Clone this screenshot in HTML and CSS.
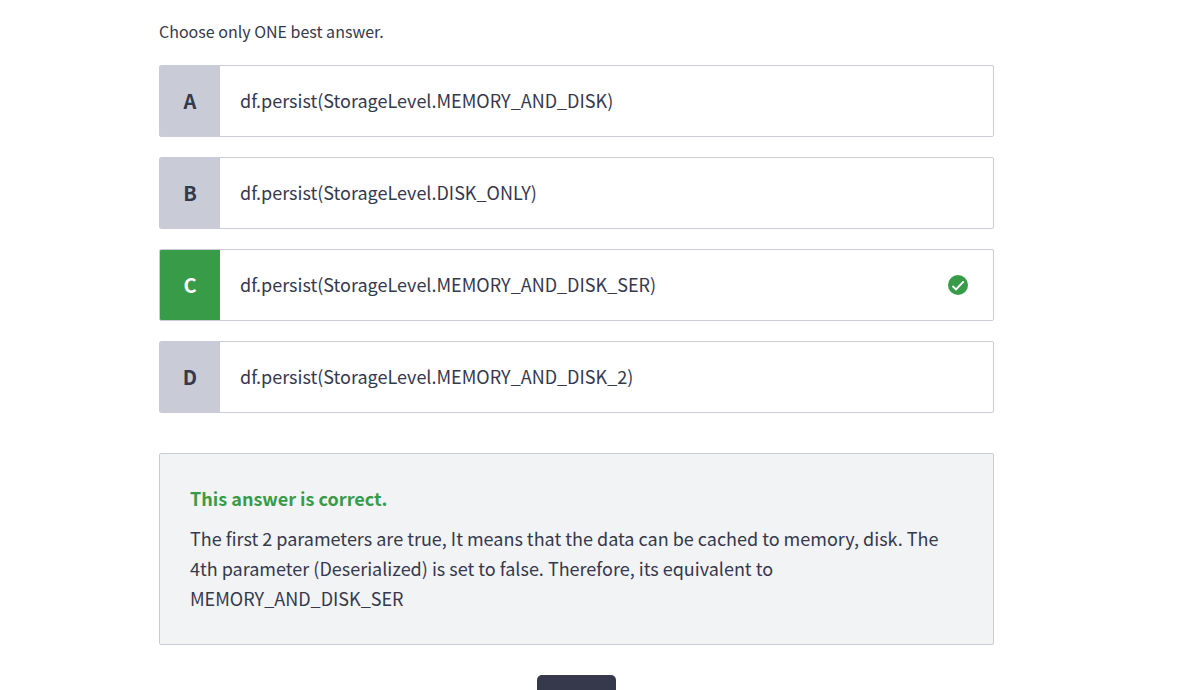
FILE: index.html
```html
<!DOCTYPE html>
<html lang="en">
<head>
<meta charset="utf-8">
<meta name="viewport" content="width=device-width, initial-scale=1">
<title>Quiz question</title>
<link rel="stylesheet" href="styles.css">
</head>
<body>
<main class="quiz">
  <p class="prompt">Choose only ONE best answer.</p>
  <div class="options">
    <button type="button" class="option"><span class="letter">A</span><span class="answer">df.persist(StorageLevel.MEMORY_AND_DISK)</span></button>
    <button type="button" class="option"><span class="letter">B</span><span class="answer">df.persist(StorageLevel.DISK_ONLY)</span></button>
    <button type="button" class="option option-correct"><span class="letter">C</span><span class="answer">df.persist(StorageLevel.MEMORY_AND_DISK_SER)</span>
      <svg class="check" viewBox="0 0 20 20" aria-hidden="true"><circle cx="10" cy="10" r="10" fill="#389b48"/><path d="M4.5 11 8 14.5 15.7 6.3" fill="none" stroke="#fff" stroke-width="1.9"/></svg>
    </button>
    <button type="button" class="option"><span class="letter">D</span><span class="answer">df.persist(StorageLevel.MEMORY_AND_DISK_2)</span></button>
  </div>
  <section class="explanation">
    <h2 class="verdict">This answer is correct.</h2>
    <p class="reason">The first 2 parameters are true, It means that the data can be cached to memory, disk. The 4th parameter (Deserialized) is set to false. Therefore, its equivalent to MEMORY_AND_DISK_SER</p>
  </section>
  <button type="button" class="next" aria-label="Next"></button>
</main>
</body>
</html>
```

FILE: styles.css
```css
* {
  box-sizing: border-box;
}

body {
  margin: 0;
  padding: 19px 29px 0 0;
  background: #fff;
  color: #36384c;
  font-family: "Noto Sans CJK SC", "Noto Sans", sans-serif;
  font-size: 18px;
  line-height: 30px;
}

.quiz {
  display: flex;
  flex-direction: column;
  max-width: 835px;
  margin: 0 auto;
}

.prompt {
  margin: 0 0 22px;
  font-size: 16px;
  line-height: 24px;
}

.options {
  display: flex;
  flex-direction: column;
  gap: 20px;
}

.option {
  display: flex;
  align-items: stretch;
  min-height: 72px;
  padding: 0;
  overflow: hidden;
  border: 1px solid #c9ccd6;
  border-radius: 2px;
  background: #fff;
  color: inherit;
  font: inherit;
  text-align: left;
  cursor: pointer;
}

.letter {
  display: flex;
  flex: 0 0 60px;
  align-items: center;
  justify-content: center;
  background: #c9ccd6;
  font-size: 20px;
  font-weight: 700;
}

.option-correct .letter {
  background: #389b48;
  color: #fff;
}

.answer {
  flex: 1;
  align-self: center;
  padding: 19px 20px 21px;
}

.check {
  flex: none;
  align-self: center;
  width: 20px;
  height: 20px;
  margin-right: 25px;
}

.explanation {
  margin-top: 40px;
  padding: 29px 30px 31px;
  border: 1px solid #c9ccd6;
  border-radius: 2px;
  background: #f1f3f5;
}

.verdict {
  margin: 0 0 10px;
  color: #389b48;
  font-size: 18px;
  font-weight: 700;
}

.reason {
  margin: 0;
}

.next {
  align-self: center;
  width: 79px;
  height: 40px;
  margin-top: 30px;
  border: 0;
  border-radius: 5px;
  background: #36384c;
}
```
